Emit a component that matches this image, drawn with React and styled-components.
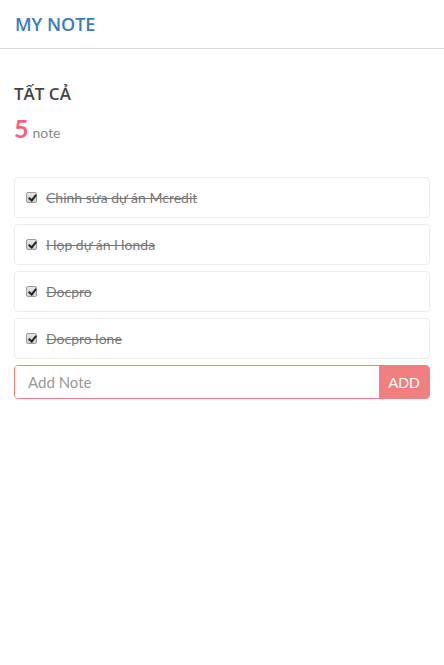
import { useState } from "react";
import styled, { createGlobalStyle } from "styled-components";

const GlobalStyle = createGlobalStyle`
  body {
    margin: 0;
    background: #fff;
    font-family: "Lato", "Open Sans", sans-serif;
  }
`;

const initialNotes = [
  { id: 1, text: "Chinh sửa dự án Mcredit", done: true },
  { id: 2, text: "Họp dự án Honda", done: true },
  { id: 3, text: "Docpro", done: true },
  { id: 4, text: "Docpro lone", done: true },
];

const App = () => {
  const [notes, setNotes] = useState(initialNotes);
  const [value, setValue] = useState("");

  const toggle = (id) =>
    setNotes(notes.map((n) => (n.id === id ? { ...n, done: !n.done } : n)));

  const addNote = () => {
    if (!value.trim()) return;
    setNotes([...notes, { id: Date.now(), text: value, done: false }]);
    setValue("");
  };

  return (
    <>
      <GlobalStyle />
      <Header>
        <Brand>MY NOTE</Brand>
      </Header>

      <Main>
        <Title>TẤT CẢ</Title>
        <Count>
          <Num>5</Num>
          <Unit>note</Unit>
        </Count>

        <List>
          {notes.map((n) => (
            <Item key={n.id}>
              <Check type="checkbox" checked={n.done} onChange={() => toggle(n.id)} />
              <ItemText $done={n.done}>{n.text}</ItemText>
            </Item>
          ))}
          <Form>
            <Input
              placeholder="Add Note"
              value={value}
              onChange={(e) => setValue(e.target.value)}
            />
            <AddButton onClick={addNote}>ADD</AddButton>
          </Form>
        </List>
      </Main>
    </>
  );
};

const Header = styled.header`
  height: 48px;
  display: flex;
  align-items: center;
  padding: 0 15px;
  border-bottom: 1px solid #dcdcdc;
`;

const Brand = styled.h1`
  margin: 0;
  font-family: "Open Sans", sans-serif;
  font-size: 18px;
  font-weight: 600;
  color: #3a7bbf;
`;

const Main = styled.main`
  padding: 33px 14px 0;
`;

const Title = styled.h2`
  margin: 0;
  font-family: "Open Sans", sans-serif;
  font-size: 17px;
  font-weight: 600;
  color: #444;
`;

const Count = styled.div`
  display: flex;
  align-items: baseline;
  gap: 4px;
  margin-top: 8px;
`;

const Num = styled.span`
  font-size: 25px;
  font-weight: 700;
  color: #ff5c7c;
`;

const Unit = styled.span`
  font-size: 14px;
  color: #888;
`;

const List = styled.div`
  display: flex;
  flex-direction: column;
  gap: 6px;
  margin-top: 34px;
`;

const Item = styled.label`
  display: flex;
  align-items: center;
  gap: 9px;
  height: 41px;
  padding: 0 11px;
  border: 1px solid #ececec;
  border-radius: 4px;
  box-sizing: border-box;
`;

const Check = styled.input`
  appearance: none;
  position: relative;
  margin: 0;
  width: 11px;
  height: 11px;
  border: 1px solid #9a9a9a;
  border-radius: 2px;
  background: linear-gradient(#e6e6e6, #cfcfcf);
  box-sizing: border-box;
  &:checked::after {
    content: "";
    position: absolute;
    left: 3px;
    top: 0px;
    width: 3px;
    height: 6px;
    border: solid #222;
    border-width: 0 2px 2px 0;
    transform: rotate(40deg);
  }
`;

const ItemText = styled.span`
  font-size: 14px;
  color: #777;
  text-decoration: ${(p) => (p.$done ? "line-through" : "none")};
`;

const Form = styled.div`
  display: flex;
  height: 34px;
  border: 1px solid #f08080;
  border-radius: 4px;
  overflow: hidden;
  box-sizing: border-box;
`;

const Input = styled.input`
  flex: 1;
  border: none;
  outline: none;
  padding: 0 13px;
  font-family: "Lato", sans-serif;
  font-size: 15px;
  color: #555;
  &::placeholder {
    color: #999;
  }
`;

const AddButton = styled.button`
  width: 50px;
  border: none;
  background: #f08080;
  color: #fff;
  font-family: "Liberation Sans", Arial, sans-serif;
  font-size: 15px;
  cursor: pointer;
`;

export default App;
